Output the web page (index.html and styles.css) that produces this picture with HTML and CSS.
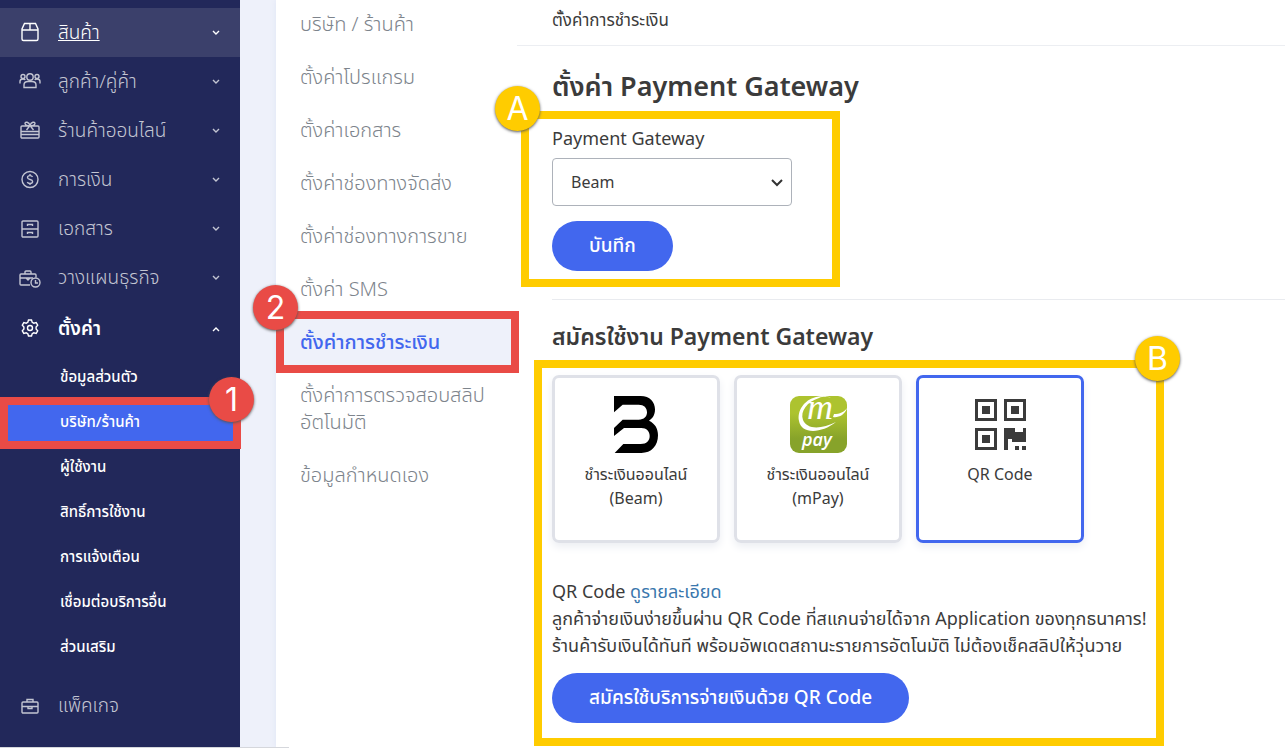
FILE: index.html
```
<!DOCTYPE html>
<html lang="th">
<head>
  <meta charset="UTF-8">
  <meta name="viewport" content="width=device-width, initial-scale=1.0">
  <title>ตั้งค่าการชำระเงิน</title>
  <link rel="stylesheet" href="styles.css">
</head>
<body>
  <div class="layout">

    <!-- Main menu -->
    <nav class="sidebar">
      <ul class="menu">
        <li>
          <a class="menu-link hovered" href="#">
            <svg class="menu-icon" viewBox="0 0 22 22"><path d="M5.500 1.500h11l2.500 5.500v10a1.500 1.500 0 0 1-1.500 1.500h-13A1.500 1.500 0 0 1 3 17V7zM3 8h16M11 1.500v6.500"/></svg>
            <span class="menu-text">สินค้า</span>
            <svg class="chevron" viewBox="0 0 8 6"><path d="M1 1l3 3 3-3"/></svg>
          </a>
        </li>
        <li>
          <a class="menu-link" href="#">
            <svg class="menu-icon" viewBox="0 0 22 22"><circle cx="11" cy="6" r="3.200"/><circle cx="4" cy="5.500" r="2"/><circle cx="18" cy="5.500" r="2"/><path d="M5 16.500V14c0-2.500 2-3.500 4-3.500h4c2 0 4 1 4 3.500v2.500zM1 12.500v-2C1 9 2 8 4 8c1 0 1.800.3 2.200 1M21 12.500v-2C21 9 20 8 18 8c-1 0-1.800.3-2.200 1"/></svg>
            <span class="menu-text">ลูกค้า/คู่ค้า</span>
            <svg class="chevron" viewBox="0 0 8 6"><path d="M1 1l3 3 3-3"/></svg>
          </a>
        </li>
        <li>
          <a class="menu-link" href="#">
            <svg class="menu-icon" viewBox="0 0 22 22"><path d="M3 6h16a1 1 0 0 1 1 1v10a1 1 0 0 1-1 1H3a1 1 0 0 1-1-1V7a1 1 0 0 1 1-1zM2 11.500h18M2 14.500h18M11 5.500L7.500 10M11 5.500l3.500 4.500M11 5.500C9.500 6 6 5.500 6 3.500S10 1.500 11 5.500C12 1.500 16 1.500 16 3.500S12.500 6 11 5.500"/></svg>
            <span class="menu-text">ร้านค้าออนไลน์</span>
            <svg class="chevron" viewBox="0 0 8 6"><path d="M1 1l3 3 3-3"/></svg>
          </a>
        </li>
        <li>
          <a class="menu-link" href="#">
            <svg class="menu-icon" viewBox="0 0 22 22"><circle cx="11" cy="10.500" r="8"/><path d="M13.500 8c-.4-1-1.300-1.400-2.500-1.400-1.400 0-2.500.7-2.500 1.900 0 2.700 5.100 1.200 5.100 4 0 1.300-1.200 2-2.600 2-1.300 0-2.300-.5-2.700-1.600M11 5v1.600M11 14.500v1.600"/></svg>
            <span class="menu-text">การเงิน</span>
            <svg class="chevron" viewBox="0 0 8 6"><path d="M1 1l3 3 3-3"/></svg>
          </a>
        </li>
        <li>
          <a class="menu-link" href="#">
            <svg class="menu-icon" viewBox="0 0 22 22"><rect x="3" y="3" width="16" height="16" rx="1"/><path d="M3 11h16M8.500 8V6.500h5V8M8.500 16v-1.500h5V16"/></svg>
            <span class="menu-text">เอกสาร</span>
            <svg class="chevron" viewBox="0 0 8 6"><path d="M1 1l3 3 3-3"/></svg>
          </a>
        </li>
        <li>
          <a class="menu-link" href="#">
            <svg class="menu-icon" viewBox="0 0 22 22"><path d="M11 18H2a1 1 0 0 1-1-1V8a1 1 0 0 1 1-1h14a1 1 0 0 1 1 1v2.500M6 7V5a1 1 0 0 1 1-1h4a1 1 0 0 1 1 1v2M1 11h6M11 11h3M7 11h4l-2 2z"/><circle cx="16.500" cy="15.500" r="4.500"/><path d="M16.500 13v3H19"/></svg>
            <span class="menu-text">วางแผนธุรกิจ</span>
            <svg class="chevron" viewBox="0 0 8 6"><path d="M1 1l3 3 3-3"/></svg>
          </a>
        </li>
        <li class="menu-group">
          <a class="menu-link open" href="#">
            <svg class="menu-icon" viewBox="0 0 22 22"><path d="M9.500 2h3l.7 2.300 1.600.9 2.400-.6 1.500 2.600L17.100 9v2l1.600 1.800-1.500 2.600-2.400-.6-1.600.9-.7 2.300h-3l-.7-2.300-1.600-.9-2.400.6-1.500-2.600L4.900 11V9L3.300 7.200l1.500-2.600 2.400.6 1.600-.9z"/><circle cx="11" cy="10" r="2.500"/></svg>
            <span class="menu-text">ตั้งค่า</span>
            <svg class="chevron" viewBox="0 0 8 6"><path d="M1 5l3-3 3 3"/></svg>
          </a>
          <ul class="submenu">
            <li><a href="#">ข้อมูลส่วนตัว</a></li>
            <li class="current">
              <a href="#">บริษัท/ร้านค้า</a>
              <span class="frame frame-red frame-one"></span>
              <span class="badge badge-red badge-one">1</span>
            </li>
            <li><a href="#">ผู้ใช้งาน</a></li>
            <li><a href="#">สิทธิ์การใช้งาน</a></li>
            <li><a href="#">การแจ้งเตือน</a></li>
            <li><a href="#">เชื่อมต่อบริการอื่น</a></li>
            <li><a href="#">ส่วนเสริม</a></li>
          </ul>
        </li>
        <li>
          <a class="menu-link" href="#">
            <svg class="menu-icon" viewBox="0 0 22 22"><path d="M4 7h14a1 1 0 0 1 1 1v9a1 1 0 0 1-1 1H4a1 1 0 0 1-1-1V8a1 1 0 0 1 1-1zM8 7V4.500h6V7M3 11.500h16M9 11.500v2h4v-2"/></svg>
            <span class="menu-text">แพ็คเกจ</span>
          </a>
        </li>
      </ul>
    </nav>

    <!-- Settings menu -->
    <nav class="settings">
      <ul>
        <li><a href="#">บริษัท / ร้านค้า</a></li>
        <li><a href="#">ตั้งค่าโปรแกรม</a></li>
        <li><a href="#">ตั้งค่าเอกสาร</a></li>
        <li><a href="#">ตั้งค่าช่องทางจัดส่ง</a></li>
        <li><a href="#">ตั้งค่าช่องทางการขาย</a></li>
        <li><a href="#">ตั้งค่า SMS</a></li>
        <li class="current">
          <a href="#">ตั้งค่าการชำระเงิน</a>
          <span class="frame frame-red frame-two"></span>
          <span class="badge badge-red badge-two">2</span>
        </li>
        <li><a href="#">ตั้งค่าการตรวจสอบสลิป<br>อัตโนมัติ</a></li>
        <li><a href="#">ข้อมูลกำหนดเอง</a></li>
      </ul>
    </nav>

    <main class="content">
      <div class="topbar">ตั้งค่าการชำระเงิน</div>

      <div class="page">
        <h1>ตั้งค่า Payment Gateway</h1>
        <form class="gateway">
          <label for="gateway">Payment Gateway</label>
          <div class="select-box">
            <select id="gateway">
              <option>Beam</option>
              <option>mPay</option>
            </select>
            <svg class="select-arrow" viewBox="0 0 14 9"><path d="M2 2l5 5 5-5"/></svg>
          </div>
          <button class="btn" type="button">บันทึก</button>
          <span class="frame frame-yellow frame-a"></span>
          <span class="badge badge-yellow badge-a">A</span>
        </form>

        <hr>

        <h2>สมัครใช้งาน Payment Gateway</h2>
        <section class="register">
          <div class="cards">
            <input type="radio" name="service" id="beam">
            <label class="card" for="beam">
              <svg class="logo" viewBox="0 0 171 171"><path d="M18 0h80c28 0 43 18 43 40 0 18-8 28-18 34 17 8 27 22 27 44 0 32-20 53-50 53H20l26-27h52c18 0 27-10 27-24s-9-24-25-24H48l-30 24V96l26-25h48c16 0 25-9 25-22 0-14-9-23-25-23H44L18 49z"/></svg>
              <span>ชำระเงินออนไลน์<br>(Beam)</span>
            </label>
            <input type="radio" name="service" id="mpay">
            <label class="card" for="mpay">
              <svg class="logo" viewBox="0 0 57 57">
                <defs>
                  <linearGradient id="green" x1="0" y1="0" x2="0" y2="1"><stop offset="0.300" stop-color="#adc32f"/><stop offset="0.750" stop-color="#87a32a"/></linearGradient>
                </defs>
                <rect width="57" height="57" rx="9" fill="url(#green)"/>
                <path class="swoosh" d="M26 1C14 4 7 15 9 25c2 13 22 13 37 1C32 33 17 34 13 24 10 15 17 6 29 2c5-2 9-1 12 0C36-1 31 0 26 1zM43 21c5 1 12-2 14-9-3 4-7 6-13 6z"/>
                <text class="logo-m" x="17" y="23">m</text>
                <text class="logo-pay" x="12" y="50">pay</text>
              </svg>
              <span>ชำระเงินออนไลน์<br>(mPay)</span>
            </label>
            <input type="radio" name="service" id="qr" checked>
            <label class="card" for="qr">
              <svg class="logo" viewBox="0 0 57 57"><g class="qr-mark"><path d="M3 3h22v22H3zM6 6v16h16V6zM32 3h22v22H32zM35 6v16h16V6zM3 32h22v22H3zM6 35v16h16V35z"/><path d="M10 10h8v8h-8zM39 10h8v8h-8zM10 39h8v8h-8zM32 32h11v4h8v-4h3v14H40v-3h-4v11h-4zM43 50h4v4h-4zM50 50h4v4h-4z"/></g></svg>
              <span>QR Code</span>
            </label>
          </div>
          <p class="details">
            QR Code <a href="#">ดูรายละเอียด</a><br>
            ลูกค้าจ่ายเงินง่ายขึ้นผ่าน QR Code ที่สแกนจ่ายได้จาก Application ของทุกธนาคาร!<br>
            ร้านค้ารับเงินได้ทันที พร้อมอัพเดตสถานะรายการอัตโนมัติ ไม่ต้องเช็คสลิปให้วุ่นวาย
          </p>
          <button class="btn" type="button">สมัครใช้บริการจ่ายเงินด้วย QR Code</button>
          <span class="frame frame-yellow frame-b"></span>
          <span class="badge badge-yellow badge-b">B</span>
        </section>
      </div>
    </main>

  </div>
  <div class="status-line"></div>
</body>
</html>
```
FILE: styles.css
```
/* General */
* {
  box-sizing: border-box;
}

body {
  margin: 0;
  background-color: #fff;
  color: #3b3b3b;
  font-family: "Noto Sans", "Noto Sans Thai", sans-serif;
  font-size: 18px;
  overflow: hidden;
}

ul {
  list-style: none;
  margin: 0;
  padding: 0;
}

a {
  text-decoration: none;
}

.layout {
  display: flex;
  min-height: 100vh;
  background-color: #eef1fa;
}

/* Main menu */
.sidebar {
  width: 240px;
  flex-shrink: 0;
  padding-top: 8px;
  background-color: #22285a;
}

.menu-link {
  display: flex;
  align-items: center;
  height: 49px;
  padding: 0 20px 0 19px;
  color: #c3c5d2;
  font-size: 19px;
  font-weight: 300;
}

.menu-link.hovered {
  background-color: #3b406b;
  color: #fff;
}

.menu-link.hovered .menu-text {
  text-decoration: underline;
}

.menu-link.open {
  color: #fff;
  font-weight: 600;
}

.menu-icon {
  width: 22px;
  height: 22px;
  margin-right: 17px;
  fill: none;
  stroke: currentColor;
  stroke-width: 1.4;
}

.menu-text {
  flex: 1;
  line-height: 27px;
}

.chevron {
  width: 8px;
  height: 6px;
  fill: none;
  stroke: currentColor;
  stroke-width: 1.4;
}

.menu-group {
  padding-top: 2px;
}

.submenu {
  padding: 1px 0 12px;
}

.submenu a {
  display: block;
  padding-left: 60px;
  color: #fff;
  font-size: 15px;
  font-weight: 500;
  line-height: 45px;
}

.submenu .current {
  position: relative;
  background-color: #4267ee;
}

/* Settings menu */
.settings {
  width: 241px;
  flex-shrink: 0;
  margin-left: 36px;
  background-color: #fff;
  box-shadow: 0 0 6px #dfe5f5;
}

.settings ul {
  margin-top: -3px;
}

.settings a {
  display: block;
  padding: 13px 24px;
  color: #7d848c;
  font-size: 20px;
  font-weight: 300;
  line-height: 27px;
  white-space: nowrap;
}

.settings .current {
  position: relative;
  background-color: #eef1fa;
}

.settings .current a {
  color: #4267ee;
  font-weight: 500;
}

/* Content */
.content {
  flex: 1;
  min-width: 0;
  background-color: #fff;
}

.topbar {
  height: 46px;
  padding-left: 35px;
  border-bottom: 1px solid #eceef2;
  font-size: 17px;
  line-height: 40px;
}

.page {
  padding: 22px 0 25px 35px;
}

h1 {
  margin: 0 0 21px;
  font-size: 27px;
  font-weight: 600;
  line-height: 36px;
}

h2 {
  margin: 20px 0 23px;
  font-size: 23px;
  font-weight: 600;
  line-height: 32px;
}

hr {
  height: 1px;
  margin: 28px 0 0;
  border: none;
  background-color: #e9ebef;
}

.gateway {
  position: relative;
}

.gateway label {
  display: block;
  margin-bottom: 6px;
  line-height: 27px;
}

.select-box {
  display: grid;
  align-items: center;
  width: 240px;
  margin-bottom: 15px;
}

.select-box select,
.select-arrow {
  grid-area: 1 / 1;
}

.select-box select {
  width: 100%;
  height: 48px;
  padding: 0 18px;
  border: 1px solid #adb2ba;
  border-radius: 4px;
  background-color: #fff;
  color: #3b3b3b;
  font-family: inherit;
  font-size: 16px;
  appearance: none;
}

.select-arrow {
  justify-self: end;
  width: 14px;
  height: 9px;
  margin-right: 8px;
  fill: none;
  stroke: #333;
  stroke-width: 2;
  pointer-events: none;
}

.btn {
  display: block;
  height: 50px;
  padding: 0 37px;
  border: none;
  border-radius: 25px;
  background-color: #4267ee;
  color: #fff;
  font-family: inherit;
  font-size: 19px;
  font-weight: 500;
  cursor: pointer;
}

/* Service cards */
.register {
  position: relative;
}

.cards {
  display: flex;
  gap: 14px;
}

.cards input {
  position: absolute;
  opacity: 0;
}

.card {
  display: flex;
  flex-direction: column;
  align-items: center;
  width: 168px;
  height: 168px;
  padding-top: 18px;
  border: 3px solid #dfe1e8;
  border-radius: 7px;
  box-shadow: 0 4px 8px #eceef3;
  font-size: 16px;
  line-height: 24px;
  text-align: center;
  cursor: pointer;
}

input:checked + .card {
  border-color: #4267ee;
}

.logo {
  width: 57px;
  height: 57px;
  margin-bottom: 9px;
  overflow: visible;
}

.qr-mark {
  fill: #3b3b3b;
  fill-rule: evenodd;
}

.swoosh {
  fill: #fff;
}

.logo-m {
  fill: #fff;
  font: italic 36px "Liberation Serif", serif;
}

.logo-pay {
  fill: #fff;
  font: italic 600 18px "Open Sans", sans-serif;
}

.details {
  margin: 35px 0 14px;
  line-height: 27px;
  white-space: nowrap;
}

.details a {
  color: #3a77ad;
}

/* Step markers */
.frame {
  position: absolute;
  z-index: 1;
  border: 8px solid;
  pointer-events: none;
}

.frame-red {
  border-color: #e94b46;
}

.frame-yellow {
  border-color: #ffcc00;
}

.frame-one {
  top: -2px;
  left: 0;
  width: 241px;
  height: 52px;
}

.frame-two {
  top: -4px;
  left: 0;
  width: 243px;
  height: 62px;
}

.frame-a {
  top: -14px;
  left: -31px;
  width: 319px;
  height: 176px;
}

.frame-b {
  top: -15px;
  left: -18px;
  width: 630px;
  height: 386px;
}

.badge {
  position: absolute;
  z-index: 2;
  width: 45px;
  height: 45px;
  border-radius: 50%;
  box-shadow: 0 1px 3px #555;
  color: #fff;
  font-family: Inter, sans-serif;
  font-size: 32px;
  line-height: 45px;
  text-align: center;
}

.badge-red {
  background-color: #e94b46;
}

.badge-yellow {
  background-color: #ffcc00;
}

.badge-one {
  top: -22px;
  left: 209px;
}

.badge-two {
  top: -30px;
  left: -23px;
}

.badge-a {
  top: -39px;
  left: -57px;
}

.badge-b {
  top: -39px;
  left: 583px;
}

/* Edge of the browser's link status */
.status-line {
  position: fixed;
  bottom: 0;
  left: 0;
  width: 289px;
  height: 1px;
  background-color: #d5d7dc;
}
```
